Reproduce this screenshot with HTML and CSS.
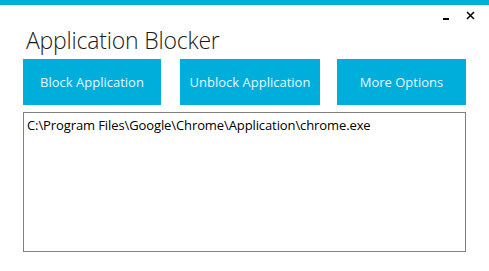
FILE: index.html
```html
<!DOCTYPE html>
<html lang="en">
<head>
    <meta charset="UTF-8">
    <title>Application Blocker</title>
    <link rel="stylesheet" href="styles.css">
</head>
<body>
    <div class="topbar"></div>
    <div class="window">
        <div class="controls">
            <span class="ctl min"></span>
            <svg class="ctl close" width="9" height="9" viewBox="0 0 9 9">
                <path d="M1 1 L8 8 M8 1 L1 8" stroke="#000" stroke-width="1.5" fill="none"/>
            </svg>
        </div>
        <h1 class="title">Application Blocker</h1>
        <div class="buttons">
            <button class="btn b1">Block Application</button>
            <button class="btn b2">Unblock Application</button>
            <button class="btn b3">More Options</button>
        </div>
        <div class="list">
            <div class="item">C:\Program Files\Google\Chrome\Application\chrome.exe</div>
        </div>
    </div>
</body>
</html>
```

FILE: styles.css
```css
body {
    margin: 0;
    padding: 0;
    background-color: #ffffff;
    font-family: "Open Sans", "Noto Sans", sans-serif;
    width: 489px;
    height: 271px;
    overflow: hidden;
}

.topbar {
    height: 5px;
    background-color: #00aedb;
}

.window {
    padding: 0 23px 0 23px;
    display: flex;
    flex-direction: column;
}

.controls {
    display: flex;
    justify-content: flex-end;
    align-items: flex-start;
    gap: 17px;
    height: 13px;
    margin-right: -9px;
    margin-top: 5px;
}

.min {
    width: 6px;
    height: 2px;
    background-color: #000;
    margin-top: 8px;
}

.close {
    display: block;
    margin-top: 1px;
}

.title {
    margin: 1px 0 0 3px;
    font-size: 23px;
    font-weight: 300;
    color: #1a1a1a;
    line-height: 32px;
    letter-spacing: -0.2px;
}

.buttons {
    display: flex;
    gap: 19px;
    margin-top: 3px;
}

.btn {
    height: 46px;
    background-color: #00aedb;
    color: #e6f6fb;
    border: none;
    font-family: "Open Sans", "Noto Sans", sans-serif;
    font-size: 13px;
    font-weight: 400;
    padding: 0;
}

.b1 { width: 138px; }
.b2 { width: 140px; margin-right: -2px; }
.b3 { width: 129px; }

.list {
    margin-top: 7px;
    height: 132px;
    border: 1px solid #808080;
    padding: 3px 3px;
}

.item {
    font-family: "Open Sans", "Noto Sans", sans-serif;
    font-size: 13px;
    color: #000;
    letter-spacing: -0.1px;
}
```
